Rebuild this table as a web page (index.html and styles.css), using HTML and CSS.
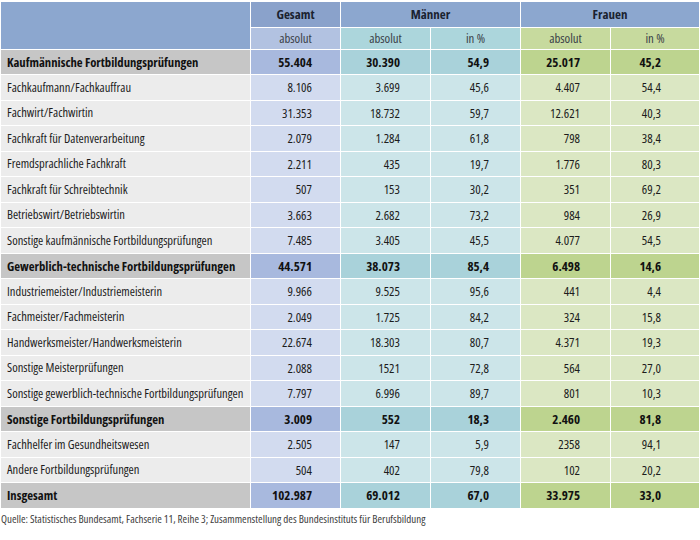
FILE: index.html
```html
<!DOCTYPE html>
<html lang="de">
<head>
<meta charset="utf-8">
<link rel="stylesheet" href="styles.css">
</head>
<body>
<table class="tbl">
  <colgroup>
    <col class="c-label"><col class="c-num"><col class="c-num"><col class="c-num"><col class="c-num"><col class="c-last">
  </colgroup>
  <thead>
    <tr class="h1">
      <th class="hl" rowspan="2"></th>
      <th class="hg">Gesamt</th>
      <th class="hm" colspan="2">Männer</th>
      <th class="hf" colspan="2">Frauen</th>
    </tr>
    <tr class="h2">
      <th class="sg">absolut</th>
      <th class="sm">absolut</th>
      <th class="sm">in %</th>
      <th class="sf">absolut</th>
      <th class="sf">in %</th>
    </tr>
  </thead>
  <tbody>
    <tr class="grp"><td class="l">Kaufmännische Fortbildungsprüfungen</td><td class="g">55.404</td><td class="ma">30.390</td><td class="mp">54,9</td><td class="fa">25.017</td><td class="fp">45,2</td></tr>
    <tr><td class="l">Fachkaufmann/Fachkauffrau</td><td class="g">8.106</td><td class="ma">3.699</td><td class="mp">45,6</td><td class="fa">4.407</td><td class="fp">54,4</td></tr>
    <tr><td class="l">Fachwirt/Fachwirtin</td><td class="g">31.353</td><td class="ma">18.732</td><td class="mp">59,7</td><td class="fa">12.621</td><td class="fp">40,3</td></tr>
    <tr><td class="l">Fachkraft für Datenverarbeitung</td><td class="g">2.079</td><td class="ma">1.284</td><td class="mp">61,8</td><td class="fa">798</td><td class="fp">38,4</td></tr>
    <tr><td class="l">Fremdsprachliche Fachkraft</td><td class="g">2.211</td><td class="ma">435</td><td class="mp">19,7</td><td class="fa">1.776</td><td class="fp">80,3</td></tr>
    <tr><td class="l">Fachkraft für Schreibtechnik</td><td class="g">507</td><td class="ma">153</td><td class="mp">30,2</td><td class="fa">351</td><td class="fp">69,2</td></tr>
    <tr><td class="l">Betriebswirt/Betriebswirtin</td><td class="g">3.663</td><td class="ma">2.682</td><td class="mp">73,2</td><td class="fa">984</td><td class="fp">26,9</td></tr>
    <tr><td class="l">Sonstige kaufmännische Fortbildungsprüfungen</td><td class="g">7.485</td><td class="ma">3.405</td><td class="mp">45,5</td><td class="fa">4.077</td><td class="fp">54,5</td></tr>
    <tr class="grp"><td class="l">Gewerblich-technische Fortbildungsprüfungen</td><td class="g">44.571</td><td class="ma">38.073</td><td class="mp">85,4</td><td class="fa">6.498</td><td class="fp">14,6</td></tr>
    <tr><td class="l">Industriemeister/Industriemeisterin</td><td class="g">9.966</td><td class="ma">9.525</td><td class="mp">95,6</td><td class="fa">441</td><td class="fp">4,4</td></tr>
    <tr><td class="l">Fachmeister/Fachmeisterin</td><td class="g">2.049</td><td class="ma">1.725</td><td class="mp">84,2</td><td class="fa">324</td><td class="fp">15,8</td></tr>
    <tr><td class="l">Handwerksmeister/Handwerksmeisterin</td><td class="g">22.674</td><td class="ma">18.303</td><td class="mp">80,7</td><td class="fa">4.371</td><td class="fp">19,3</td></tr>
    <tr><td class="l">Sonstige Meisterprüfungen</td><td class="g">2.088</td><td class="ma">1521</td><td class="mp">72,8</td><td class="fa">564</td><td class="fp">27,0</td></tr>
    <tr><td class="l">Sonstige gewerblich-technische Fortbildungsprüfungen</td><td class="g">7.797</td><td class="ma">6.996</td><td class="mp">89,7</td><td class="fa">801</td><td class="fp">10,3</td></tr>
    <tr class="grp"><td class="l">Sonstige Fortbildungsprüfungen</td><td class="g">3.009</td><td class="ma">552</td><td class="mp">18,3</td><td class="fa">2.460</td><td class="fp">81,8</td></tr>
    <tr><td class="l">Fachhelfer im Gesundheitswesen</td><td class="g">2.505</td><td class="ma">147</td><td class="mp">5,9</td><td class="fa">2358</td><td class="fp">94,1</td></tr>
    <tr><td class="l">Andere Fortbildungsprüfungen</td><td class="g">504</td><td class="ma">402</td><td class="mp">79,8</td><td class="fa">102</td><td class="fp">20,2</td></tr>
    <tr class="grp"><td class="l">Insgesamt</td><td class="g">102.987</td><td class="ma">69.012</td><td class="mp">67,0</td><td class="fa">33.975</td><td class="fp">33,0</td></tr>
  </tbody>
</table>
<p class="src">Quelle: Statistisches Bundesamt, Fachserie 11, Reihe 3; Zusammenstellung des Bundesinstituts für Berufsbildung</p>
</body>
</html>
```
FILE: styles.css
```css
html, body {
  margin: 0;
  padding: 0;
  background: #ffffff;
}
body {
  padding-top: 1px;
  font-family: "Open Sans", "DejaVu Sans Condensed", sans-serif;
  font-stretch: 75%;
  color: #1c1c1c;
}
.tbl {
  border-collapse: collapse;
  table-layout: fixed;
  width: 699px;
  font-size: 12.8px;
}
.c-label { width: 250px; }
.c-num { width: 90px; }
.c-last { width: 89px; }

.tbl th, .tbl td {
  border: 1px solid #ffffff;
  padding: 0;
  white-space: nowrap;
  overflow: hidden;
}
.h1 th {
  height: 24.5px;
  background: #8ca7cf;
  font-weight: bold;
  font-size: 13px;
  color: #1a2230;
  text-align: center;
}
.h1 .hg { background: #8aa2cb; }
.h2 th {
  height: 21px;
  font-weight: normal;
  color: #3a3f48;
  text-align: center;
}
.h2 .sg { background: #b2c2e1; }
.h2 .sm { background: #acd6dc; }
.h2 .sf { background: #c7da9e; }

.tbl td { height: 24.5px; text-align: right; }
.tbl td.l { text-align: left; padding-left: 6px; background: #ececec; font-size: 12.5px; }
.tbl td.g { background: #d2dbef; padding-right: 28px; }
.tbl td.ma { background: #cce5e9; padding-right: 30px; }
.tbl td.mp { background: #cce5e9; padding-right: 31px; }
.tbl td.fa { background: #dbe7c3; padding-right: 30px; }
.tbl td.fp { background: #dbe7c3; padding-right: 38px; }

.grp td { font-weight: bold; font-size: 13px; color: #111; }
.tbl .grp td.l { background: #c6c6c6; font-size: 12.7px; }
.grp td.g { background: #a8b9de; }
.grp td.ma, .grp td.mp { background: #a9d2da; }
.grp td.fa, .grp td.fp { background: #bdd48f; }

.src {
  margin: 3px 0 0 1px;
  font-size: 11px;
  color: #3c3c3c;
  line-height: 14px;
}
```
